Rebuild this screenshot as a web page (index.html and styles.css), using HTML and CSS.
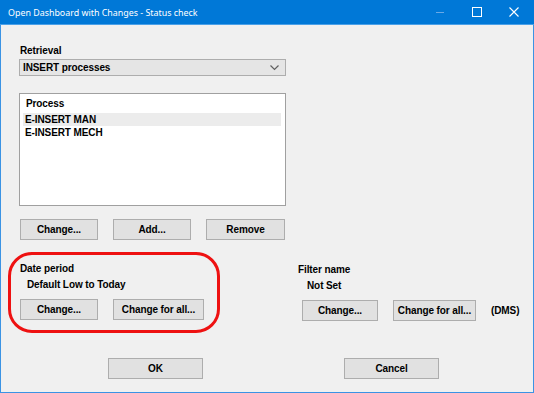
FILE: index.html
```html
<!DOCTYPE html>
<html lang="en">

<head>
    <meta charset="UTF-8">
    <title>Open Dashboard with Changes - Status check</title>
    <link rel="stylesheet" href="styles.css">
</head>

<body>
    <div class="window">
        <div class="titlebar">
            <span class="title">Open Dashboard with Changes - Status check</span>
            <div class="controls">
                <svg class="min" width="10" height="10" viewBox="0 0 10 10">
                    <path d="M1 5.5h8" stroke="#6aa9e6" stroke-width="1" />
                </svg>
                <svg class="max" width="10" height="10" viewBox="0 0 10 10">
                    <rect x="0.5" y="0.5" width="9" height="9" fill="none" stroke="#fff" stroke-width="1" />
                </svg>
                <svg class="close" width="10" height="10" viewBox="0 0 10 10">
                    <path d="M0.5 0.5l9 9M9.5 0.5l-9 9" stroke="#fff" stroke-width="1.1" />
                </svg>
            </div>
        </div>

        <div class="main">
            <div class="top">
                <div class="label">Retrieval</div>
                <div class="select">
                    <span>INSERT processes</span>
                    <svg width="9" height="6" viewBox="0 0 9 6">
                        <path d="M0.5 0.5l4 4 4-4" fill="none" stroke="#606060" stroke-width="1.2" />
                    </svg>
                </div>

                <div class="listbox">
                    <div class="list-head">Process</div>
                    <div class="list-item selected">E-INSERT MAN</div>
                    <div class="list-item">E-INSERT MECH</div>
                </div>

                <div class="btn-row">
                    <button class="btn">Change...</button>
                    <button class="btn">Add...</button>
                    <button class="btn wide">Remove</button>
                </div>
            </div>

            <div class="groups">
                <div class="group date">
                    <div class="label">Date period</div>
                    <div class="value">Default Low to Today</div>
                    <div class="btn-row">
                        <button class="btn">Change...</button>
                        <button class="btn all">Change for all...</button>
                    </div>
                </div>

                <div class="group filter">
                    <div class="label">Filter name</div>
                    <div class="value">Not Set</div>
                    <div class="btn-row">
                        <button class="btn small">Change...</button>
                        <button class="btn all-small">Change for all...</button>
                        <span class="note">(DMS)</span>
                    </div>
                </div>
            </div>

            <div class="footer">
                <button class="btn big">OK</button>
                <button class="btn big">Cancel</button>
            </div>
        </div>
    </div>
</body>

</html>
```

FILE: styles.css
```css
* {
    margin: 0;
    padding: 0;
    box-sizing: border-box;
}

body {
    background: #f0f0f0;
    font-family: "Liberation Sans", Arial, sans-serif;
    font-size: 10px;
    letter-spacing: -0.1px;
    font-weight: bold;
    color: #000;
}

.window {
    width: 534px;
    height: 393px;
    border: 1px solid #3b93e4;
    border-top: none;
    background: #f0f0f0;
}

.titlebar {
    height: 25px;
    background: #0078d7;
    border-bottom: 1px solid #4aa0e8;
    margin: 0 -1px;
    display: flex;
    align-items: center;
    color: #fff;
}

.titlebar .title {
    font-family: "Noto Sans", "Open Sans", sans-serif;
    font-weight: normal;
    font-size: 8.9px;
    letter-spacing: 0;
    padding-left: 8px;
    flex: 1;
}

.titlebar .controls {
    display: flex;
    align-items: center;
}

.titlebar .controls svg {
    display: block;
}

.titlebar .min {
    margin-right: 27px;
}

.titlebar .max {
    margin-right: 27px;
}

.titlebar .close {
    margin-right: 15px;
}

.top {
    padding-left: 18px;
}

.label,
.value {
    line-height: 16px;
}

.top .label {
    margin-top: 18px;
    margin-left: 1px;
}

.select {
    width: 267px;
    height: 17px;
    background: #e5e5e5;
    border: 1px solid #adadad;
    display: flex;
    align-items: center;
    justify-content: space-between;
    padding: 0 6px 0 3px;
}

.listbox {
    width: 267px;
    height: 113px;
    margin-top: 17px;
    background: #fff;
    border: 1px solid #a0a0a0;
    padding: 3px 3px 0 3px;
}

.list-head {
    line-height: 14px;
    padding-left: 3px;
}

.list-item {
    line-height: 14px;
    padding-left: 2px;
}

.list-item.selected {
    background: #ececec;
    margin-top: 2px;
    line-height: 13px;
    margin-right: 1px;
}

.btn-row {
    display: flex;
    align-items: center;
    gap: 15px;
}

.top .btn-row {
    margin-top: 13px;
    padding-left: 1px;
}

.btn {
    width: 78px;
    height: 21px;
    background: #e1e1e1;
    border: 1px solid #adadad;
    font-family: "Liberation Sans", Arial, sans-serif;
    font-size: 10px;
    letter-spacing: -0.1px;
    font-weight: bold;
    color: #000;
    white-space: nowrap;
}

.btn.wide {
    width: 79px;
}

.groups {
    display: flex;
    margin-top: 12px;
}

.group.date {
    width: 212px;
    height: 81px;
    margin-left: 7px;
    border: 3px solid #ee1111;
    border-radius: 24px;
    padding: 6px 0 0 9px;
}

.group .value {
    padding-left: 7px;
}

.group .btn-row {
    margin-top: 6px;
}

.btn.all {
    width: 91px;
}

.group.filter {
    margin-left: 78px;
    padding-top: 10px;
}

.group.filter .btn-row {
    margin-left: 4px;
}

.group.filter .value {
    padding-left: 9px;
}

.btn.small {
    width: 76px;
}

.btn.all-small {
    width: 83px;
}

.footer {
    display: flex;
    gap: 141px;
    margin-top: 25px;
    padding-left: 107px;
}

.btn.big {
    width: 95px;
}
```
